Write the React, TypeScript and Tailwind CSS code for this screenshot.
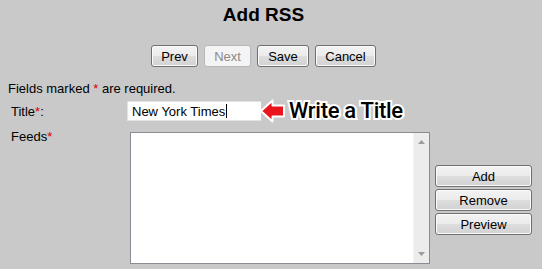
import React from "react";

const btn =
  "h-[22px] rounded-[3px] border border-[#707070] bg-[linear-gradient(#f3f3f3_0%,#ebebeb_50%,#dedede_50%,#d2d2d2_100%)] shadow-[inset_0_0_0_1px_#fbfbfb] text-[13px] leading-none text-black";

const App = () => {
  return (
    <div className="h-[269px] w-[542px] overflow-hidden bg-[#c9c9c9] font-['Liberation_Sans',Arial,sans-serif] text-[13px] text-black">
      <h1 className="pt-[4px] pr-[15px] text-center text-[19px] font-bold leading-[22px]">Add RSS</h1>

      {/* Top actions */}
      <div className="mt-[19px] flex justify-center gap-[6px] pr-[15px]">
        <button className={`${btn} w-[47px]`}>Prev</button>
        <button
          disabled
          className="h-[22px] w-[47px] rounded-[3px] border border-[#b5b9bc] bg-[#f4f4f4] text-[13px] leading-none text-[#8a8a8a]"
        >
          Next
        </button>
        <button className={`${btn} w-[52px]`}>Save</button>
        <button className={`${btn} w-[61px]`}>Cancel</button>
      </div>

      <p className="mt-[14px] pl-[8px] leading-[15px]">
        Fields marked <span className="text-[#e00000]">*</span> are required.
      </p>

      {/* Title row */}
      <div className="mt-[3px] flex items-center pl-[11px]">
        <label className="w-[116px] leading-[15px]">
          Title<span className="text-[#e00000]">*</span>:
        </label>
        <div className="flex h-[20px] w-[134px] items-center border border-r-0 border-[#e2e2e2] bg-white pl-[4px] leading-[15px]">
          New York Times
          <span className="ml-[1px] h-[14px] w-px bg-black" />
        </div>
        <svg width="27" height="24" viewBox="0 0 27 24" className="-ml-[2px]">
          <path
            d="M2 12 L13.5 1.5 L13.5 6.5 L25 6.5 L25 17.5 L13.5 17.5 L13.5 22.5 Z"
            fill="#e8161c"
            stroke="white"
            strokeWidth="2"
            strokeLinejoin="round"
          />
        </svg>
        <span className="ml-[3px] font-['Roboto',sans-serif] text-[22px] font-medium leading-[24px] tracking-[-0.3px] text-black [-webkit-text-stroke:4px_white] [paint-order:stroke_fill]">
          Write a Title
        </span>
      </div>

      {/* Feeds row */}
      <div className="mt-[6px] flex pl-[11px]">
        <label className="w-[119px] leading-[15px]">
          Feeds<span className="text-[#e00000]">*</span>
        </label>
        <div className="mt-[3px] flex h-[132px] w-[300px] border border-[#8b8b93] bg-white">
          <textarea className="flex-1 resize-none outline-none" />
          <div className="flex w-[16px] flex-col items-center justify-between border-l border-[#f4f4f4] bg-[#ececec] pt-[7px] pb-[7px]">
            <svg width="7" height="4" viewBox="0 0 7 4">
              <path d="M3.5 0 L7 4 L0 4 Z" fill="#9c9c9c" />
            </svg>
            <svg width="7" height="4" viewBox="0 0 7 4">
              <path d="M0 0 L7 0 L3.5 4 Z" fill="#9c9c9c" />
            </svg>
          </div>
        </div>
        <div className="ml-[5px] mt-[36px] flex flex-col gap-[2px] self-start">
          <button className={`${btn} w-[97px]`}>Add</button>
          <button className={`${btn} w-[97px]`}>Remove</button>
          <button className={`${btn} w-[97px]`}>Preview</button>
        </div>
      </div>
    </div>
  );
};

export default App;
